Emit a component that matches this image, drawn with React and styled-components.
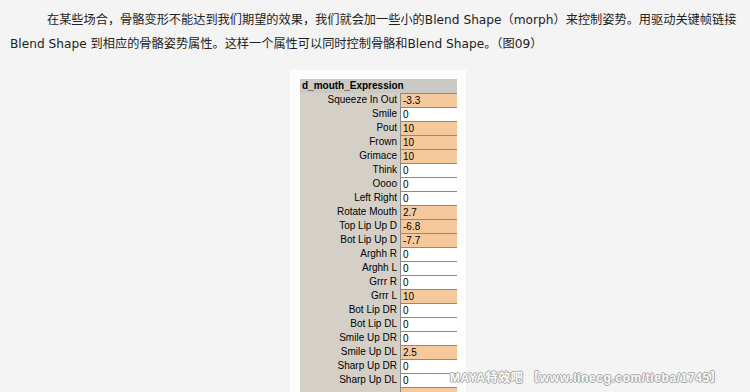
import React from "react";
import styled, { createGlobalStyle } from "styled-components";

const Global = createGlobalStyle`
  html, body { margin: 0; padding: 0; }
  body {
    background: #f4f4f4;
    width: 750px;
    height: 392px;
    overflow: hidden;
    font-family: "DejaVu Sans", "Noto Sans CJK SC", sans-serif;
  }
`;

const Page = styled.div`
  position: relative;
  width: 750px;
  height: 392px;
  overflow: hidden;
  display: flex;
  flex-direction: column;
`;

const Para = styled.p`
  margin: 8px 0 0 0;
  padding: 0 0 0 10px;
  font-family: "DejaVu Sans", "Noto Sans CJK SC", sans-serif;
  font-size: 12.2px;
  line-height: 24px;
  color: #222;
  white-space: nowrap;
`;

const Line = styled.span`
  display: block;
  padding-left: ${(p) => (p.$indent ? "37px" : "0")};
`;

const Frame = styled.div`
  margin: 14px 0 0 290px;
  width: 176px;
  background: #fdfdfd;
  padding: 9px 9px 0 10px;
  box-sizing: border-box;
  flex: 1;
`;

const Panel = styled.div`
  background: #d4d0c8;
  font-family: "Liberation Sans", Arial, sans-serif;
  font-size: 10px;
  color: #000;
`;

const Header = styled.div`
  height: 14px;
  line-height: 14px;
  font-weight: bold;
  padding-left: 2px;
  background: #cbc9c4;
`;

const Row = styled.div`
  display: grid;
  grid-template-columns: 100px 1fr;
  height: 14px;
`;

const Label = styled.div`
  text-align: right;
  padding-right: 3px;
  line-height: 14px;
  white-space: nowrap;
`;

const Field = styled.div`
  box-sizing: border-box;
  border-top: 1px solid #8c8a86;
  border-left: 1px solid #8c8a86;
  background: ${(p) => (p.$hot ? "#f6c99c" : "#ffffff")};
  line-height: 13px;
  padding-left: 2px;
`;

const Watermark = styled.div`
  position: absolute;
  left: 450px;
  top: 368px;
  font-family: "Liberation Sans", "Noto Sans CJK SC", sans-serif;
  font-size: 12px;
  font-weight: bold;
  letter-spacing: 0.6px;
  color: #fafafa;
  text-shadow: -1px 0 #a8a8a8, 1px 0 #a8a8a8, 0 -1px #a8a8a8, 0 1px #a8a8a8;
  white-space: nowrap;
`;

const rows = [
  ["Squeeze In Out", "-3.3", true],
  ["Smile", "0", false],
  ["Pout", "10", true],
  ["Frown", "10", true],
  ["Grimace", "10", true],
  ["Think", "0", false],
  ["Oooo", "0", false],
  ["Left Right", "0", false],
  ["Rotate Mouth", "2.7", true],
  ["Top Lip Up D", "-6.8", true],
  ["Bot Lip Up D", "-7.7", true],
  ["Arghh R", "0", false],
  ["Arghh L", "0", false],
  ["Grrr R", "0", false],
  ["Grrr L", "10", true],
  ["Bot Lip DR", "0", false],
  ["Bot Lip DL", "0", false],
  ["Smile Up DR", "0", false],
  ["Smile Up DL", "2.5", true],
  ["Sharp Up DR", "0", false],
  ["Sharp Up DL", "0", false],
  ["", "", true],
];

export default function App() {
  return (
    <Page>
      <Global />
      <Para>
        <Line $indent>
          在某些场合，骨骼变形不能达到我们期望的效果，我们就会加一些小的Blend Shape（morph）来控制姿势。用驱动关键帧链接
        </Line>
        <Line>
          Blend Shape 到相应的骨骼姿势属性。这样一个属性可以同时控制骨骼和Blend Shape。（图09）
        </Line>
      </Para>
      <Frame>
        <Panel>
          <Header>d_mouth_Expression</Header>
          {rows.map(([l, v, hot], i) => (
            <Row key={i}>
              <Label>{l}</Label>
              <Field $hot={hot}>{v}</Field>
            </Row>
          ))}
        </Panel>
      </Frame>
      <Watermark>MAYA特效吧 【www.linecg.com/tieba/1745】</Watermark>
    </Page>
  );
}
